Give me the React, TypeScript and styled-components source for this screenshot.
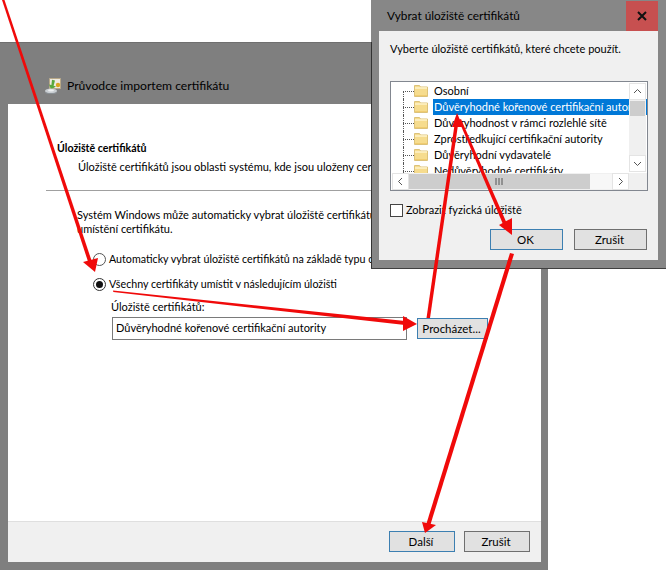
import React from "react";
import styled, { createGlobalStyle } from "styled-components";

const Global = createGlobalStyle`
  html, body { margin: 0; padding: 0; background: #fff; }
  body { font-family: Lato, "Open Sans", sans-serif; font-size: 11px; color: #000; }
  #root { width: 666px; height: 570px; overflow: hidden; }
`;

const Desktop = styled.div`
  position: relative;
  width: 666px;
  height: 570px;
  overflow: hidden;
  background: #fff;
  font-size: 11px;
  line-height: 14px;
`;

const Wizard = styled.section`
  position: absolute;
  left: 0;
  top: 42px;
  width: 548px;
  height: 528px;
  box-sizing: border-box;
  display: flex;
  flex-direction: column;
  background: #7f7f7f;
  border-top: 1px solid #6f6f6f;
  padding: 0 7px 8px 8px;
`;

const WizardHeader = styled.header`
  height: 61px;
  display: flex;
  align-items: center;
  gap: 5px;
  padding: 25px 0 0 36px;
  box-sizing: border-box;
  font-size: 12.15px;
  color: #000;
`;

const WizardBody = styled.div`
  flex: 1;
  background: #fff;
  display: flex;
  flex-direction: column;
  padding: 37px 0 0 50px;
  min-height: 0;
`;

const Heading = styled.h2`
  margin: 0 0 0 -1px;
  font-size: 10.6px;
  line-height: 14px;
  font-weight: 700;
`;

const Intro = styled.p`
  margin: 5px 0 0 20px;
  white-space: nowrap;
`;

const Rule = styled.hr`
  margin: 16px 0 0 -12px;
  width: 470px;
  height: 1px;
  border: 0;
  background: #a0a0a0;
`;

const Paragraph = styled.p`
  margin: 17px 0 0 19px;
  white-space: nowrap;
`;

const Options = styled.div`
  margin: 15px 0 0 35px;
  display: flex;
  flex-direction: column;
  gap: 9px;
  font-size: 10.7px;
`;

const Option = styled.label`
  display: flex;
  align-items: center;
  gap: 3px;
  white-space: nowrap;
  height: 16px;
`;

const Radio = styled.span<{ $checked?: boolean }>`
  box-sizing: border-box;
  width: 13px;
  height: 13px;
  border-radius: 50%;
  border: 1px solid ${(p) => (p.$checked ? "#333" : "#555")};
  background: #fff;
  display: flex;
  align-items: center;
  justify-content: center;
  &::after {
    content: "";
    display: ${(p) => (p.$checked ? "block" : "none")};
    width: 7px;
    height: 7px;
    border-radius: 50%;
    background: #111;
  }
`;

const StoreLabel = styled.div`
  margin: 8px 0 0 53px;
`;

const StoreRow = styled.div`
  margin: 3px 0 0 54px;
  display: flex;
  gap: 10px;
  align-items: flex-start;
`;

const StoreInput = styled.div`
  box-sizing: border-box;
  width: 295px;
  height: 23px;
  border: 1px solid #7a7a7a;
  padding: 1px 3px;
  line-height: 18px;
  white-space: nowrap;
`;

const Spacer = styled.div`
  flex: 1;
`;

const Footer = styled.footer`
  margin-left: -50px;
  height: 41px;
  box-sizing: border-box;
  background: #f0f0f0;
  border-top: 1px solid #dfdfdf;
  display: flex;
  justify-content: flex-end;
  align-items: flex-start;
  gap: 9px;
  padding: 9px 11px 0 0;
`;

const Button = styled.button<{ $focus?: boolean; $w: number; $nudge?: number }>`
  box-sizing: border-box;
  width: ${(p) => p.$w}px;
  height: 21px;
  margin-top: ${(p) => p.$nudge ?? 0}px;
  padding: 0 2px 0 0;
  background: #e1e1e1;
  border: 1px solid ${(p) => (p.$focus ? "#3c7fb1" : "#6f6f6f")};
  font: inherit;
  font-size: 11.5px;
  color: #000;
  line-height: 1;
`;

const Dialog = styled.section`
  position: absolute;
  left: 371px;
  top: 0;
  width: 295px;
  height: 269px;
  box-sizing: border-box;
  background: #878787;
  border-bottom: 1px solid #404040;
  padding: 0 8px 8px 8px;
  display: flex;
  flex-direction: column;
  &::before {
    content: "";
    position: absolute;
    left: 0;
    top: 42px;
    bottom: 0;
    width: 1px;
    background: #333;
  }
`;

const DialogTitle = styled.header`
  height: 31px;
  flex: none;
  display: flex;
  align-items: center;
  justify-content: space-between;
  padding-left: 8px;
  font-size: 11.8px;
`;

const Close = styled.span`
  width: 32px;
  height: 30px;
  margin-top: 1px;
  background: #c75050;
  display: flex;
  align-items: center;
  justify-content: center;
  color: #111;
`;

const DialogBody = styled.div`
  flex: 1;
  background: #f0f0f0;
  padding: 11px 0 0 11px;
  display: flex;
  flex-direction: column;
`;

const Tree = styled.div`
  margin-top: 25px;
  position: relative;
  width: 258px;
  height: 110px;
  box-sizing: border-box;
  border: 1px solid #828790;
  background: #fff;
  overflow: hidden;
`;

const TreeList = styled.ul`
  list-style: none;
  margin: 0;
  padding: 1px 0 0;
  height: 90px;
  overflow: hidden;
`;

const TreeRow = styled.li`
  height: 16px;
  display: flex;
  align-items: center;
  padding-left: 12px;
  white-space: nowrap;
  position: relative;
  &::before {
    content: "";
    position: absolute;
    left: 12px;
    top: 0;
    height: 16px;
    border-left: 1px dotted #555;
  }
  &:first-child::before {
    top: 8px;
    height: 8px;
  }
`;

const TreeDots = styled.span`
  width: 11px;
  flex: none;
  border-top: 1px dotted #555;
`;

const TreeText = styled.span<{ $selected?: boolean }>`
  margin-left: 5px;
  padding: 0 1px;
  flex: ${(p) => (p.$selected ? 1 : "none")};
  background: ${(p) => (p.$selected ? "#0078d7" : "transparent")};
  color: ${(p) => (p.$selected ? "#fff" : "#000")};
  line-height: 16px;
  overflow: hidden;
`;

const VScroll = styled.div`
  position: absolute;
  right: 1px;
  top: 1px;
  width: 17px;
  height: 89px;
  background: #f0f0f0;
  display: flex;
  flex-direction: column;
  justify-content: space-between;
  box-sizing: border-box;
`;

const VThumb = styled.div`
  position: absolute;
  left: 0;
  top: 17px;
  width: 17px;
  height: 17px;
  background: #cdcdcd;
  border: 1px solid #f0f0f0;
  box-sizing: border-box;
`;

const ScrollBtn = styled.div`
  height: 17px;
  width: 17px;
  background: #fff;
  border: 1px solid #e4e4e4;
  box-sizing: border-box;
  display: flex;
  align-items: center;
  justify-content: center;
  flex: none;
`;

const HScroll = styled.div`
  position: absolute;
  left: 1px;
  bottom: 0;
  right: 18px;
  height: 17px;
  background: #f0f0f0;
  display: flex;
  align-items: stretch;
`;

const HThumb = styled.div`
  width: 181px;
  background: #cdcdcd;
  display: flex;
  align-items: center;
  justify-content: center;
  margin: 1px 0;
`;

const HTrack = styled.div`
  flex: 1;
  background: #f7f7f7;
  margin: 1px 0;
`;

const Corner = styled.div`
  position: absolute;
  right: 0;
  bottom: 0;
  width: 18px;
  height: 17px;
  background: #f0f0f0;
`;

const CheckRow = styled.label`
  display: flex;
  align-items: center;
  gap: 3px;
  margin-top: 11px;
  height: 16px;
`;

const CheckBox = styled.span`
  width: 13px;
  height: 13px;
  box-sizing: border-box;
  border: 1px solid #444;
  background: #fff;
`;

const DialogButtons = styled.div`
  display: flex;
  gap: 11px;
  margin: 11px 0 0 100px;
`;

const Arrows = styled.svg`
  position: absolute;
  left: 0;
  top: 0;
  pointer-events: none;
`;

const Folder = () => (
  <svg width="14" height="12" viewBox="0 0 14 12" style={{ flex: "none" }}>
    <path d="M.5.5h5l1 1.5h7v9.5H.5z" fill="#f6dc8e" stroke="#dcc27a" />
    <path d="M1 3h12" stroke="#fff4cf" strokeWidth="1.4" />
    <path d="M1 10.5h12" stroke="#f0cc70" />
  </svg>
);

const WizardIcon = () => (
  <svg width="18" height="18" viewBox="0 0 18 18" style={{ flex: "none" }}>
    <path d="M5.5 1.5h11v10h-11z" fill="#eeeae0" stroke="#b8a888" />
    <circle cx="14" cy="8" r="2.2" fill="#d9a520" />
    <path d="M11 3.5L8 2.8 7.4 8 5 7.5 7 12.5 12 9.5 9.6 8.8z" fill="#58a83c" />
    <ellipse cx="7" cy="14" rx="6" ry="2.6" fill="#c9ced2" />
    <ellipse cx="7" cy="13.4" rx="3" ry="1.1" fill="#eef0f2" />
    <path d="M1 14.6c1 2 11 2 12 0v1c-1 2-11 2-12 0z" fill="#8b9196" />
  </svg>
);

const Chevron = ({ d }: { d: string }) => (
  <svg width="9" height="9" viewBox="0 0 9 9">
    <path d={d} fill="none" stroke="#555" strokeWidth="1" />
  </svg>
);

const folders = [
  "Osobní",
  "Důvěryhodné kořenové certifikační autority",
  "Důvěryhodnost v rámci rozlehlé sítě",
  "Zprostředkující certifikační autority",
  "Důvěryhodní vydavatelé",
  "Nedůvěryhodné certifikáty",
];

const RED = "#f00a0a";

export default function App() {
  return (
    <Desktop>
      <Global />
      <Wizard>
        <WizardHeader>
          <WizardIcon />
          <span>Průvodce importem certifikátu</span>
        </WizardHeader>
        <WizardBody>
          <Heading>Úložiště certifikátů</Heading>
          <Intro>Úložiště certifikátů jsou oblasti systému, kde jsou uloženy certifikáty.</Intro>
          <Rule />
          <Paragraph>
            Systém Windows může automaticky vybrat úložiště certifikátů, nebo můžete zadat
            <br />
            umístění certifikátu.
          </Paragraph>
          <Options>
            <Option>
              <Radio />
              Automaticky vybrat úložiště certifikátů na základě typu certifikátu
            </Option>
            <Option>
              <Radio $checked />
              Všechny certifikáty umístit v následujícím úložišti
            </Option>
          </Options>
          <StoreLabel>Úložiště certifikátů:</StoreLabel>
          <StoreRow>
            <StoreInput>Důvěryhodné kořenové certifikační autority</StoreInput>
            <Button $w={71} $nudge={1} $focus>Procházet...</Button>
          </StoreRow>
          <Spacer />
          <Footer>
            <Button $w={66} $focus>Další</Button>
            <Button $w={66}>Zrušit</Button>
          </Footer>
        </WizardBody>
      </Wizard>

      <Dialog>
        <DialogTitle>
          <span>Vybrat úložiště certifikátů</span>
          <Close>
            <svg width="10" height="10" viewBox="0 0 10 10">
              <path d="M1 1l8 8M9 1l-8 8" stroke="#111" strokeWidth="2" />
            </svg>
          </Close>
        </DialogTitle>
        <DialogBody>
          <div>Vyberte úložiště certifikátů, které chcete použít.</div>
          <Tree>
            <TreeList>
              {folders.map((f, i) => (
                <TreeRow key={f}>
                  <TreeDots />
                  <Folder />
                  <TreeText $selected={i === 1}>{f}</TreeText>
                </TreeRow>
              ))}
            </TreeList>
            <VScroll>
              <ScrollBtn><Chevron d="M1 6l3.5-3.5L8 6" /></ScrollBtn>
              <VThumb />
              <ScrollBtn><Chevron d="M1 3l3.5 3.5L8 3" /></ScrollBtn>
            </VScroll>
            <HScroll>
              <ScrollBtn><Chevron d="M6 1L2.5 4.5 6 8" /></ScrollBtn>
              <HThumb>
                <svg width="9" height="7" viewBox="0 0 9 7">
                  <path d="M1 0v7M4 0v7M7 0v7" stroke="#555" strokeWidth="1" />
                </svg>
              </HThumb>
              <HTrack />
              <ScrollBtn><Chevron d="M3 1l3.5 3.5L3 8" /></ScrollBtn>
            </HScroll>
            <Corner />
          </Tree>
          <CheckRow>
            <CheckBox />
            Zobrazit fyzická úložiště
          </CheckRow>
          <DialogButtons>
            <Button $w={73} $focus>OK</Button>
            <Button $w={73}>Zrušit</Button>
          </DialogButtons>
        </DialogBody>
      </Dialog>

      <Arrows width="666" height="570" viewBox="0 0 666 570">
        <g fill={RED}>
          <path d="M2 0L4.5 0L92 262L88.5 263z" />
          <path d="M113 290.5L113.3 292L405 325L405 321z" />
          <path d="M426.5 318L430 318L458 125L454.5 125z" />
          <path d="M458.5 120L461 119L507.5 225L504 226.5z" />
          <path d="M510 253L514 254L430 526L426 525z" />
          <path d="M95 272L83 262L98 258z" />
          <path d="M417 324L403 316L403 331z" />
          <path d="M457 113L452 127L463 127z" />
          <path d="M512 235L499 225L512 218z" />
          <path d="M425 533L422 522L436 525z" />
        </g>
      </Arrows>
    </Desktop>
  );
}
